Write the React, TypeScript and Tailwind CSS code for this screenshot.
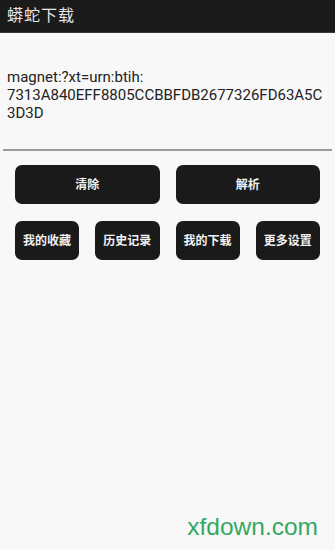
export default function App() {
  const small = ['我的收藏', '历史记录', '我的下载', '更多设置'];
  return (
    <div
      className="w-[335px] h-[550px] bg-[#f8f8f8] flex flex-col overflow-hidden"
      style={{ fontFamily: '"Roboto", "Noto Sans CJK SC", sans-serif' }}
    >
      <div className="h-[33px] bg-[#1b1b1b] border-b border-[#3a3a3a] flex items-center px-[7px]">
        <span className="text-[16px] text-[#e6e6e6] tracking-[1px]">蟒蛇下载</span>
      </div>
      <div className="px-[7px] pt-[35px] h-[116px] text-[15px] leading-[18px] text-[#222] break-all">
        magnet:?xt=urn:btih:
        <br />
        7313A840EFF8805CCBBFDB2677326FD63A5C3D3D
      </div>
      <div className="mx-[3px] h-[2px] bg-[#9a9a9a]" />
      <div className="px-[15px] pt-[14px] grid grid-cols-2 gap-x-[16px]">
        <button className="h-[39px] rounded-[7px] bg-[#1a1a1a] text-[#f2f2f2] text-[12px] font-semibold">清除</button>
        <button className="h-[39px] rounded-[7px] bg-[#1a1a1a] text-[#f2f2f2] text-[12px] font-semibold">解析</button>
      </div>
      <div className="px-[15px] pt-[17px] grid grid-cols-4 gap-x-[16px]">
        {small.map((s) => (
          <button key={s} className="h-[39px] rounded-[7px] bg-[#1a1a1a] text-[#f2f2f2] text-[12px] font-semibold">
            {s}
          </button>
        ))}
      </div>
      <div className="flex-1" />
      <div className="flex justify-end pr-[17px] pb-[9px]">
        <span className="text-[24.5px] leading-[28px] text-[#35a860]" style={{ fontFamily: '"Liberation Sans", sans-serif' }}>
          xfdown.com
        </span>
      </div>
    </div>
  );
}
